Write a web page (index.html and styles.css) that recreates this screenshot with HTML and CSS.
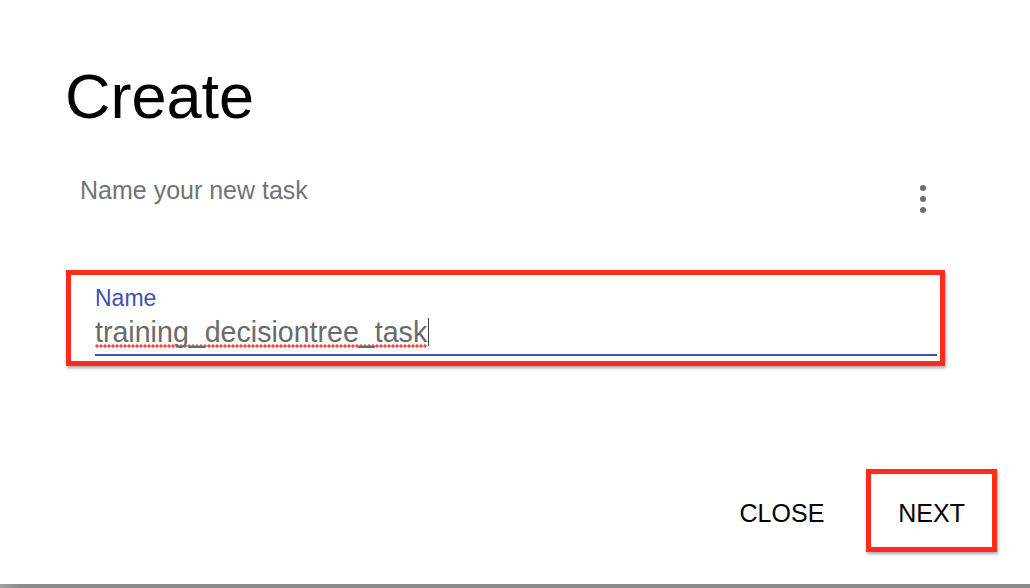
FILE: index.html
```html
<!DOCTYPE html>
<html lang="en">
<head>
<meta charset="utf-8">
<title>Create</title>
<link rel="stylesheet" href="styles.css">
</head>
<body>
<div class="page">
  <div class="dialog">
    <h1 class="title">Create</h1>
    <div class="sub-row">
      <div class="subtitle">Name your new task</div>
      <div class="menu" aria-label="More">
        <span class="dot"></span><span class="dot"></span><span class="dot"></span>
      </div>
    </div>
    <div class="field highlight">
      <label class="label">Name</label>
      <div class="input"><span class="value">training_decisiontree_task</span><span class="caret"></span></div>
    </div>
    <div class="actions">
      <button class="btn">CLOSE</button>
      <button class="btn highlight-btn">NEXT</button>
    </div>
  </div>
  <div class="bottom-bar"></div>
</div>
</body>
</html>
```

FILE: styles.css
```css
html, body {
  margin: 0;
  padding: 0;
  background: #ffffff;
}

body {
  font-family: "Liberation Sans", Arial, Helvetica, sans-serif;
  width: 1030px;
  height: 588px;
  overflow: hidden;
}

.page {
  display: flex;
  flex-direction: column;
  height: 588px;
}

.dialog {
  flex: 1;
  display: flex;
  flex-direction: column;
}

.title {
  margin: 60px 0 0 65px;
  font-size: 63px;
  line-height: 72px;
  font-weight: 400;
  color: #000;
}

.sub-row {
  margin: 43px 0 0 80px;
  width: 846px;
  height: 30px;
  display: flex;
  justify-content: space-between;
  align-items: flex-start;
}

.subtitle {
  font-size: 25px;
  line-height: 30px;
  color: #737373;
}

.menu {
  display: flex;
  flex-direction: column;
  gap: 5px;
  margin-top: 10px;
}

.dot {
  width: 6px;
  height: 6px;
  border-radius: 50%;
  background: #6e6e6e;
}

.field {
  margin: 65px 0 0 66px;
  width: 879px;
  box-sizing: border-box;
  padding: 10px 3px 5px 24px;
  display: flex;
  flex-direction: column;
}

.highlight {
  border: 5px solid #ff2b1f;
  box-shadow: 1px 2px 3px rgba(0, 0, 0, 0.35);
}

.label {
  font-size: 23px;
  line-height: 27px;
  color: #3f51b5;
}

.input {
  margin-top: 4px;
  padding-bottom: 6px;
  border-bottom: 2px solid #3f51b5;
  font-size: 28.6px;
  line-height: 32px;
  color: #6a6a6a;
  display: flex;
  align-items: center;
}

.value {
  background-image: radial-gradient(circle, #f24a4a 0, #f24a4a 1.3px, rgba(242, 74, 74, 0) 2px);
  background-size: 4px 4px;
  background-repeat: repeat-x;
  background-position: 0 100%;
}

.caret {
  width: 1px;
  height: 28px;
  background: #444;
  margin-left: 1px;
}

.actions {
  margin: 103px 33px 0 0;
  display: flex;
  justify-content: flex-end;
  gap: 10px;
}

.btn {
  font-family: "Liberation Sans", Arial, Helvetica, sans-serif;
  font-size: 25px;
  line-height: 30px;
  color: #000;
  background: transparent;
  border: 5px solid transparent;
  padding: 24px 27px 19px;
  margin: 0;
  cursor: pointer;
}

.highlight-btn {
  border-color: #ff2b1f;
  box-shadow: 1px 2px 3px rgba(0, 0, 0, 0.35);
}

.bottom-bar {
  height: 4px;
  background: linear-gradient(to right, #a3a3a3 0, #8c8c8c 20px, #8c8c8c 100%);
}
```
